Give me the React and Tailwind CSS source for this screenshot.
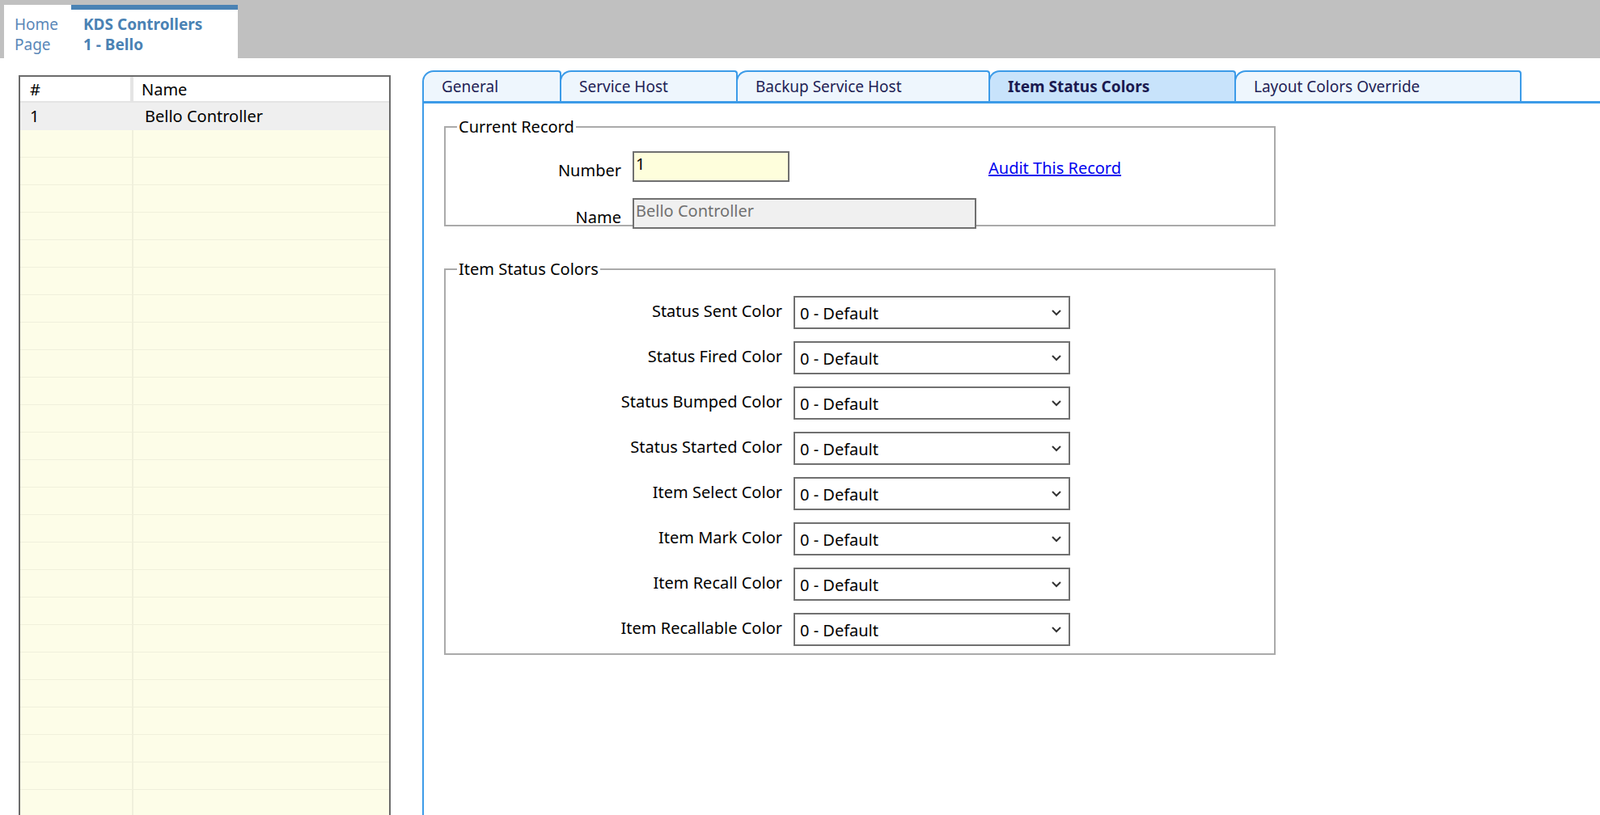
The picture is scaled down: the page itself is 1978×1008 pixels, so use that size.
import React from "react";

const colorFields = [
  "Status Sent Color",
  "Status Fired Color",
  "Status Bumped Color",
  "Status Started Color",
  "Item Select Color",
  "Item Mark Color",
  "Item Recall Color",
  "Item Recallable Color",
];

const tabs = [
  { label: "General", w: "w-[172px]" },
  { label: "Service Host", w: "w-[220px]" },
  { label: "Backup Service Host", w: "w-[314px]" },
  { label: "Item Status Colors", w: "w-[306px]", active: true },
  { label: "Layout Colors Override", w: "w-[355px]" },
];

const Chevron = () => (
  <svg width="14" height="10" viewBox="0 0 14 10" className="mr-2">
    <path d="M2 2 L7 7 L12 2" stroke="#333" strokeWidth="2" fill="none" />
  </svg>
);

export default function App() {
  return (
    <div className="w-[1978px] h-[1008px] bg-white overflow-hidden flex flex-col font-[family-name:'Liberation_Sans',Arial,sans-serif] text-[20px] text-black">
      {/* top document tabs */}
      <div className="h-[72px] bg-[#c0c0c0] flex items-end pl-[5px] shrink-0 font-[family-name:'DejaVu_Sans',Verdana,sans-serif] text-[19px] leading-[25px]">
        <div className="w-[83px] h-[66px] bg-white px-[13px] pt-[12px] text-[#5a87b8]">Home<br />Page</div>
        <div className="w-[206px] h-[66px] bg-white border-t-[6px] border-[#4a82b4] pl-[15px] pt-[6px] font-bold text-[#4a82b4] whitespace-nowrap overflow-hidden">
          KDS Controllers<br />1 - Bello
        </div>
      </div>

      <div className="flex flex-1 min-h-0">
        {/* grid */}
        <div className="pl-[23px] pt-[21px] w-[522px] shrink-0">
          <div className="w-[460px] h-[920px] border-2 border-[#6b6b6b] bg-[#fdfde8] overflow-hidden">
            <div className="flex h-[32px] bg-white border-b-2 border-[#e4e4e4] leading-[32px]">
              <div className="w-[140px] pl-[12px] border-r-4 border-[#e4e4e4]">#</div>
              <div className="flex-1 pl-[10px]">Name</div>
            </div>
            <div className="flex h-[34px] bg-[#efefef] leading-[34px]">
              <div className="w-[140px] pl-[12px]">1</div>
              <div className="flex-1 pl-[14px]">Bello Controller</div>
            </div>
            {Array.from({ length: 26 }).map((_, i) => (
              <div key={i} className="flex h-[34px] border-b border-[#f0f0dc]">
                <div className="w-[140px] border-r-2 border-[#f0f0dc]" />
                <div className="flex-1" />
              </div>
            ))}
          </div>
        </div>

        {/* right panel */}
        <div className="flex-1 pt-[15px] flex flex-col">
          <div className="flex items-end h-[41px] border-b-[3px] border-[#3c9be8] font-[family-name:'DejaVu_Sans',Verdana,sans-serif] text-[19px]">
            {tabs.map((t) => (
              <div
                key={t.label}
                className={`${t.w} h-[38px] border-2 border-b-0 border-[#3c9be8] rounded-tr-[4px] rounded-tl-[14px] pl-[22px] leading-[36px] whitespace-nowrap -mr-[2px] ${
                  t.active ? "bg-[#c8e3fb] font-bold text-[#1a1a50]" : "bg-[#eef6fd] text-[#222255]"
                }`}
              >
                {t.label}
              </div>
            ))}
          </div>
          <div className="flex-1 border-l-2 border-[#3c9be8] pl-[25px] pt-[14px]">
            {/* Current Record */}
            <fieldset className="w-[1028px] h-[138px] border-2 border-[#aaaaaa] px-[18px]">
              <legend className="px-[2px] -ml-[4px]">Current Record</legend>
              <div className="flex items-center mt-[14px]">
                <div className="w-[213px] text-right pr-[14px] pt-[10px]">Number</div>
                <div className="w-[194px] h-[38px] bg-[#fefedc] border-2 border-[#707070] px-[2px] leading-[28px]">1</div>
                <a className="ml-[246px] text-[#0000ee] underline pt-[4px]">Audit This Record</a>
              </div>
              <div className="flex items-center mt-[18px]">
                <div className="w-[213px] text-right pr-[14px] pt-[10px]">Name</div>
                <div className="w-[425px] h-[38px] bg-[#f0f0f0] border-2 border-[#707070] px-[2px] leading-[28px] text-[#707070]">Bello Controller</div>
              </div>
            </fieldset>

            {/* Item Status Colors */}
            <fieldset className="mt-[38px] w-[1028px] h-[492px] border-2 border-[#aaaaaa] px-[18px]">
              <legend className="px-[2px] -ml-[4px]">Item Status Colors</legend>
              <div className="flex flex-col gap-[15px] mt-[18px]">
                {colorFields.map((f) => (
                  <div key={f} className="flex items-center">
                    <div className="w-[412px] text-right pr-[14px] -mt-[4px]">{f}</div>
                    <div className="w-[342px] h-[41px] border-2 border-[#707070] bg-white flex items-center justify-between pl-[6px]">
                      <span className="pt-[2px]">0 - Default</span>
                      <Chevron />
                    </div>
                  </div>
                ))}
              </div>
            </fieldset>
          </div>
        </div>
      </div>
    </div>
  );
}
